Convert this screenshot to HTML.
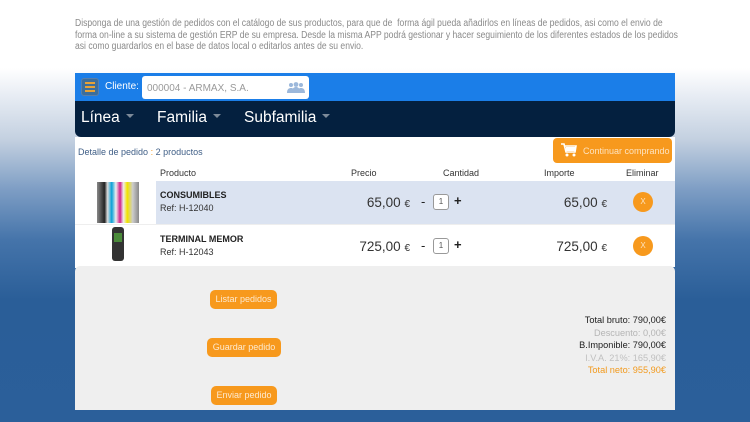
<!DOCTYPE html>
<html><head><meta charset="utf-8"><style>
*{margin:0;padding:0;box-sizing:border-box}
body{width:750px;height:422px;overflow:hidden;position:relative;font-family:"Liberation Sans",sans-serif;
background:linear-gradient(180deg,#fff 0,#fff 68px,#e8edf4 95px,#c3d0e0 140px,#7d9dc4 190px,#4574aa 240px,#2a5e98 300px,#2b5f9a 422px)}
.intro{position:absolute;left:75px;top:18px;width:670px;font-size:9.8px;line-height:11.6px;color:#8a8a8a;transform:scaleX(0.875);transform-origin:0 0;white-space:nowrap}
.panel{position:absolute;left:75px;top:73px;width:600px}
.bar{height:28px;background:#1b7ee8;position:relative}
.menu{position:absolute;left:6px;top:5px;width:18px;height:18px;border:1px solid #5a7fa8;border-radius:3px;background:#3c6e9c}
.menu i{position:absolute;left:3px;width:10px;height:2px;background:#e8a235}
.bar .lbl{position:absolute;left:30px;top:8px;font-size:10px;color:#fff}
.inp{position:absolute;left:67px;top:3px;width:167px;height:23px;background:#fff;border-radius:3px;font-size:10px;color:#9a9a9a;padding:7px 5px}
.nav{height:36px;background:#04203f;border-radius:0 0 6px 6px;color:#fff;font-size:15.5px;position:relative}
.nav span{position:absolute;top:8px}
.nav span:after{content:"";display:inline-block;margin-left:6px;vertical-align:middle;border:4px solid transparent;border-top:4px solid #7d8a99;border-bottom:0;position:relative;top:-2px}
.white{background:#fff;height:129px;position:relative}
.det{position:absolute;left:3px;top:10px;font-size:9px;color:#3f5e86}
.det b{color:#f29a1d;font-weight:normal}
.cont{position:absolute;left:478px;top:1px;width:119px;height:25px;background:#f7991d;border-radius:4px;color:#fde3bf;font-size:9px;padding:8px 0 0 30px}
.th{position:absolute;top:31px;font-size:9px;color:#333}
.row{position:absolute;left:0;width:600px;height:43px}
.r1{top:44px;background:#dbe3f1}
.r2{top:87px;background:#fff;border-top:1px solid #eee}
.img{position:absolute;left:0;top:0;width:81px;height:43px;background:#fff}
.nm{position:absolute;left:85px;top:9px;font-size:9px;font-weight:bold;color:#222}
.ref{position:absolute;left:85px;top:22px;font-size:9px;color:#333}
.pr{position:absolute;right:265px;top:14px;font-size:13.5px;color:#333}
.pr small,.im small{font-size:10px}
.im{position:absolute;right:68px;top:14px;font-size:13.5px;color:#333}
.qty{position:absolute;left:346px;top:13px;font-size:13px;color:#222}
.box{position:absolute;left:358px;top:13px;width:16px;height:16px;border:1px solid #999;border-radius:3px;background:#fff;font-size:8px;text-align:center;line-height:14px;color:#555}
.plus{position:absolute;left:379px;top:12px;font-size:13px;color:#222;font-weight:bold}
.x{position:absolute;left:558px;top:11px;width:20px;height:20px;border-radius:50%;background:#f7991d;color:#fde3bf;font-size:8px;text-align:center;line-height:20px}
.grey{background:#efefef;height:144px;position:relative;border-radius:5px 5px 0 0}
.btn{position:absolute;background:#f7991d;color:#fde9cf;font-size:9px;border-radius:5px;text-align:center;height:19px;line-height:19px}
.tot{position:absolute;right:9px;top:48px;text-align:right;font-size:9.2px;line-height:12.6px}
</style></head><body>
<div class="intro">Disponga de una gestión de pedidos con el catálogo de sus productos, para que de &nbsp;forma ágil pueda añadirlos en líneas de pedidos, asi como el envio de<br>forma on-line a su sistema de gestión ERP de su empresa. Desde la misma APP podrá gestionar y hacer seguimiento de los diferentes estados de los pedidos<br>asi como guardarlos en el base de datos local o editarlos antes de su envio.</div>
<div class="panel">
 <div class="bar">
  <div class="menu"><i style="top:3px"></i><i style="top:7px"></i><i style="top:11px"></i></div>
  <div class="lbl">Cliente:</div>
  <div class="inp">000004 - ARMAX, S.A.
   <svg style="position:absolute;right:4px;top:6px" width="18" height="11" viewBox="0 0 18 11"><g fill="#9cb8db"><circle cx="4" cy="3" r="2"/><circle cx="14" cy="3" r="2"/><circle cx="9" cy="2.5" r="2.4"/><path d="M0 11c0-4 2-5 4-5s4 1 4 5zM10 11c0-4 2-5 4-5s4 1 4 5zM5 11c0-5 2-6 4-6s4 1 4 6z"/></g></svg>
  </div>
 </div>
 <div class="nav"><span style="left:6px">Línea</span><span style="left:82px">Familia</span><span style="left:169px">Subfamilia</span></div>
 <div class="white">
  <div class="det">Detalle de pedido <b>:</b> 2 productos</div>
  <div class="cont"><svg style="position:absolute;left:8px;top:5px" width="16" height="14" viewBox="0 0 16 14"><path d="M0 1h3l2 8h9l1-6H4" fill="none" stroke="#fff" stroke-width="1.6"/><rect x="5" y="4" width="9" height="4" fill="#fff"/><circle cx="6" cy="12" r="1.5" fill="#fff"/><circle cx="13" cy="12" r="1.5" fill="#fff"/></svg>Continuar comprando</div>
  <div class="th" style="left:85px">Producto</div>
  <div class="th" style="left:276px">Precio</div>
  <div class="th" style="left:368px">Cantidad</div>
  <div class="th" style="left:469px">Importe</div>
  <div class="th" style="left:551px">Eliminar</div>
  <div class="row r1">
   <div class="img"><div style="position:absolute;left:22px;top:1px;width:42px;height:41px;background:linear-gradient(90deg,#888 0,#222 18%,#ddd 25%,#0aa0d8 35%,#eee 45%,#d0208a 55%,#eee 63%,#f2e200 72%,#ccc 85%,#888)"></div></div>
   <div class="nm">CONSUMIBLES</div><div class="ref">Ref: H-12040</div>
   <div class="pr">65,00 <small>€</small></div>
   <div class="qty">-</div><div class="box">1</div><div class="plus">+</div>
   <div class="im">65,00 <small>€</small></div>
   <div class="x">X</div>
  </div>
  <div class="row r2">
   <div class="img"><div style="position:absolute;left:37px;top:2px;width:12px;height:34px;background:#333;border-radius:3px"></div><div style="position:absolute;left:39px;top:8px;width:8px;height:9px;background:#4a8a3a"></div></div>
   <div class="nm">TERMINAL MEMOR</div><div class="ref">Ref: H-12043</div>
   <div class="pr">725,00 <small>€</small></div>
   <div class="qty">-</div><div class="box">1</div><div class="plus">+</div>
   <div class="im">725,00 <small>€</small></div>
   <div class="x">X</div>
  </div>
 </div>
 <div class="grey">
  <div class="btn" style="left:135px;top:24px;width:67px">Listar pedidos</div>
  <div class="btn" style="left:132px;top:72px;width:74px">Guardar pedido</div>
  <div class="btn" style="left:136px;top:120px;width:66px">Enviar pedido</div>
  <div class="tot"><span style="color:#222">Total bruto: 790,00€</span><br><span style="color:#b5b5b5">Descuento: 0,00€</span><br><span style="color:#222">B.Imponible: 790,00€</span><br><span style="color:#c0c0c0">I.V.A. 21%: 165,90€</span><br><span style="color:#f29a1d">Total neto: 955,90€</span></div>
 </div>
</div>
</body></html>
